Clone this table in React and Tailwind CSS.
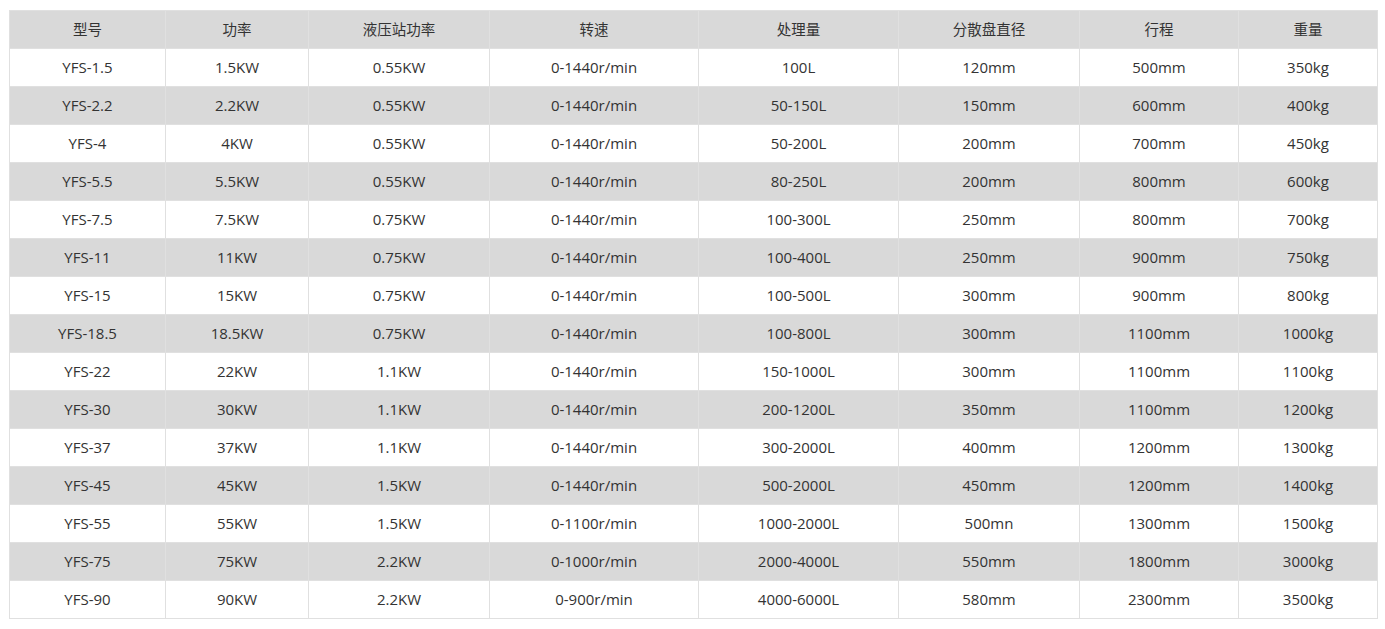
import React from 'react';

const headers = ['型号', '功率', '液压站功率', '转速', '处理量', '分散盘直径', '行程', '重量'];
const widths = [156, 143, 181, 209, 200, 181, 159, 139];

const rows = [
    ['YFS-1.5', '1.5KW', '0.55KW', '0-1440r/min', '100L', '120mm', '500mm', '350kg'],
    ['YFS-2.2', '2.2KW', '0.55KW', '0-1440r/min', '50-150L', '150mm', '600mm', '400kg'],
    ['YFS-4', '4KW', '0.55KW', '0-1440r/min', '50-200L', '200mm', '700mm', '450kg'],
    ['YFS-5.5', '5.5KW', '0.55KW', '0-1440r/min', '80-250L', '200mm', '800mm', '600kg'],
    ['YFS-7.5', '7.5KW', '0.75KW', '0-1440r/min', '100-300L', '250mm', '800mm', '700kg'],
    ['YFS-11', '11KW', '0.75KW', '0-1440r/min', '100-400L', '250mm', '900mm', '750kg'],
    ['YFS-15', '15KW', '0.75KW', '0-1440r/min', '100-500L', '300mm', '900mm', '800kg'],
    ['YFS-18.5', '18.5KW', '0.75KW', '0-1440r/min', '100-800L', '300mm', '1100mm', '1000kg'],
    ['YFS-22', '22KW', '1.1KW', '0-1440r/min', '150-1000L', '300mm', '1100mm', '1100kg'],
    ['YFS-30', '30KW', '1.1KW', '0-1440r/min', '200-1200L', '350mm', '1100mm', '1200kg'],
    ['YFS-37', '37KW', '1.1KW', '0-1440r/min', '300-2000L', '400mm', '1200mm', '1300kg'],
    ['YFS-45', '45KW', '1.5KW', '0-1440r/min', '500-2000L', '450mm', '1200mm', '1400kg'],
    ['YFS-55', '55KW', '1.5KW', '0-1100r/min', '1000-2000L', '500mn', '1300mm', '1500kg'],
    ['YFS-75', '75KW', '2.2KW', '0-1000r/min', '2000-4000L', '550mm', '1800mm', '3000kg'],
    ['YFS-90', '90KW', '2.2KW', '0-900r/min', '4000-6000L', '580mm', '2300mm', '3500kg'],
];

const cell = 'h-[38px] p-0 text-center align-middle border border-[#e0e0e0]';

const App = () => {
    return (
        <div className="bg-white min-h-screen pt-[10px] pl-[9px] font-['Open_Sans','Noto_Sans_CJK_SC',sans-serif] text-[#333]">
            <table className="table-fixed border-collapse w-[1368px]">
                <colgroup>
                    {widths.map((w, i) => (
                        <col key={i} style={{ width: w }} />
                    ))}
                </colgroup>
                <thead>
                    <tr className="bg-[#d9d9d9]">
                        {headers.map((h) => (
                            <th key={h} className={cell + ' font-normal text-[14.5px]'}>{h}</th>
                        ))}
                    </tr>
                </thead>
                <tbody>
                    {rows.map((r, i) => (
                        <tr key={r[0]} className={i % 2 === 1 ? 'bg-[#d9d9d9]' : 'bg-white'}>
                            {r.map((c, j) => (
                                <td key={j} className={cell + ' text-[15px]'}>{c}</td>
                            ))}
                        </tr>
                    ))}
                </tbody>
            </table>
        </div>
    );
};

export default App;
